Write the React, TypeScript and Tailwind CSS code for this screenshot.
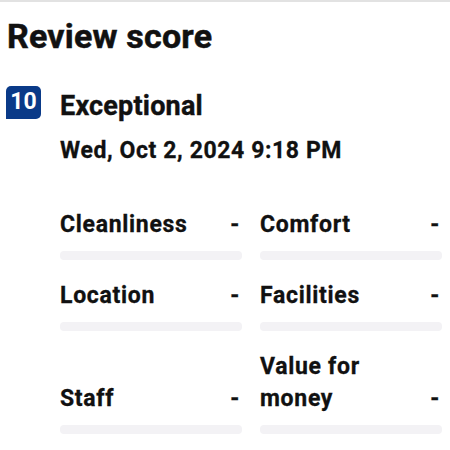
const font = { fontFamily: "Roboto, 'Liberation Sans', sans-serif" };

const subScores = [
  { label: "Cleanliness", value: "-" },
  { label: "Comfort", value: "-" },
  { label: "Location", value: "-" },
  { label: "Facilities", value: "-" },
  { label: "Staff", value: "-" },
  { label: "Value for money", value: "-" },
];

function ScoreCell({ label, value }: { label: string; value: string }) {
  return (
    <div className="flex flex-col justify-end">
      <div className="flex items-end justify-between gap-3 text-[23px] font-bold leading-[32px] tracking-[0.7px] [-webkit-text-stroke:0.3px_#111]">
        <span className="max-w-[130px]">{label}</span>
        <span className="pr-[2px]">{value}</span>
      </div>
      <div className="mt-[10px] h-[9px] rounded-sm bg-[#f3f2f5]" />
    </div>
  );
}

export default function App() {
  return (
    <div
      className="h-[450px] w-[450px] overflow-hidden border-t-2 border-[#e2e2e2] bg-white text-[#111]"
      style={font}
    >
      <h1 className="ml-[7px] mt-[14px] text-[34px] font-bold leading-[40px] tracking-[0.2px] [-webkit-text-stroke:0.5px_#111]">
        Review score
      </h1>

      <div className="mt-[30px] flex items-start gap-[19px] pl-[6px]">
        <div className="flex h-[33px] w-[35px] items-center justify-center rounded-[5px] rounded-bl-none bg-[#0a3a88] text-[23px] font-bold text-white">
          10
        </div>
        <div className="pt-[4px] text-[27px] font-bold leading-[32px] tracking-[0.2px] [-webkit-text-stroke:0.4px_#111]">
          Exceptional
        </div>
      </div>

      <div className="ml-[60px] mt-[14px] text-[23px] font-bold leading-[30px] tracking-[0.6px] [-webkit-text-stroke:0.3px_#111]">
        Wed, Oct 2, 2024 9:18 PM
      </div>

      <div className="ml-[60px] mr-[8px] mt-[43px] grid grid-cols-2 gap-x-[18px] gap-y-[20px]">
        {subScores.map((s) => (
          <ScoreCell key={s.label} label={s.label} value={s.value} />
        ))}
      </div>
    </div>
  );
}
